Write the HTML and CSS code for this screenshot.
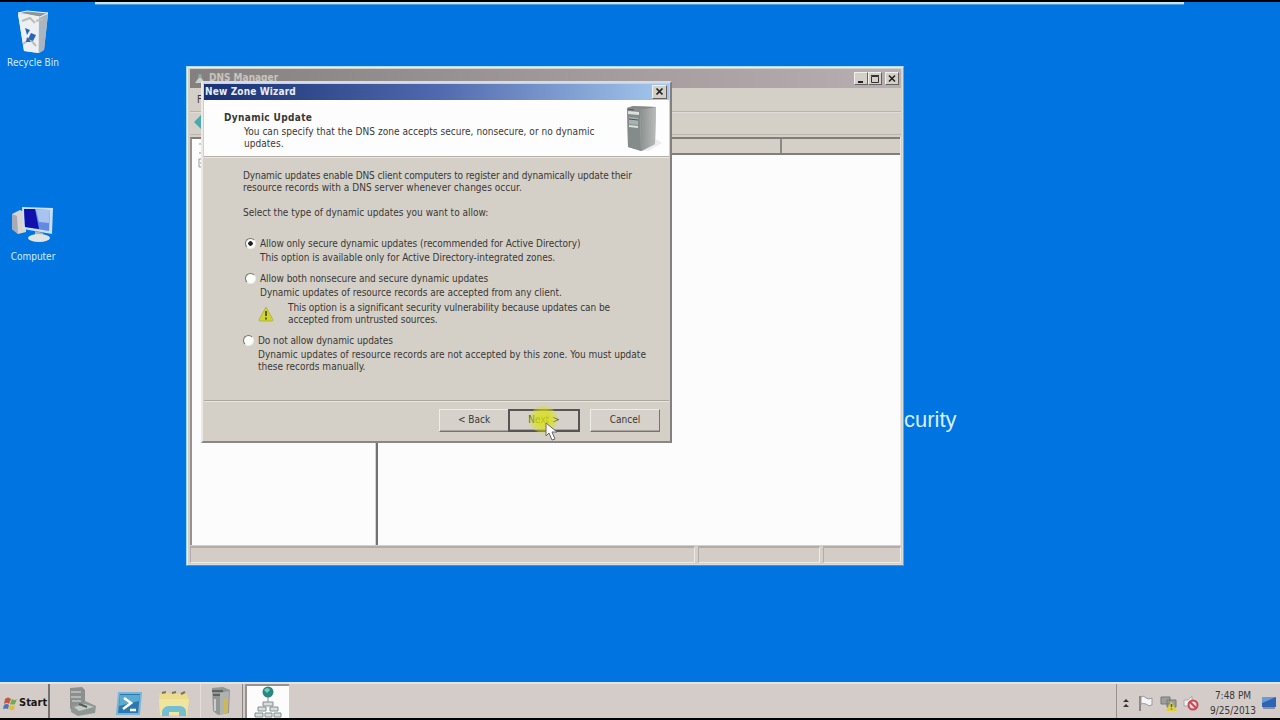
FILE: index.html
```html
<!DOCTYPE html>
<html lang="en">
<head>
<meta charset="UTF-8">
<meta name="viewport" content="width=device-width, initial-scale=1.0">
<title>New Zone Wizard</title>
<link rel="stylesheet" href="styles.css">
</head>
<body>
<div class="desktop">
    <div class="top-line"></div>

    <!-- Desktop icons -->
    <div class="desk-icon recycle">
        <svg width="36" height="44" viewBox="0 0 36 44">
            <path d="M3 4 L33 4 L29 40 L24 43 L9 41 Z" fill="#d5d9df"/>
            <path d="M3 4 L24 6 L23 43 L9 41 Z" fill="#edf0f2"/>
            <path d="M24 6 L33 4 L29 40 L24 43 Z" fill="#a9b5c0"/>
            <path d="M3 3 L12 1 L33 3 L25 7 Z" fill="#8e9697" stroke="#f0f5f5"/>
            <path d="M7 11 l8 -3 5 5 M21 11 l7 -2 M8 34 l7 -5 6 7" stroke="#bcbcb8" stroke-width="2" fill="none"/>
            <path d="M10 18 l5 2 -3 5 z M16 23 l5 2 -3 6 -5 -2 z M12 27 l4 5 -5 0 z" fill="#2965bd"/>
        </svg>
        <span>Recycle Bin</span>
    </div>
    <div class="desk-icon computer">
        <svg width="44" height="40" viewBox="0 0 44 40">
            <path d="M1 9 L9 5 L15 8 L15 27 L7 29 L1 24 Z" fill="#d9d4d0"/>
            <path d="M1 9 L6 11 L7 29 L1 24 Z" fill="#a5abb8"/>
            <path d="M11 2 L42 3 L41 29 L12 24 Z" fill="#c7e0f4"/>
            <path d="M13 4 L39 5 L38 26 L14 22 Z" fill="#618ae0"/>
            <path d="M13 4 L24 4 L28 24 L14 22 Z" fill="#1010ad"/>
            <path d="M25 5 L39 5 L38 18 L28 17 Z" fill="#a9c2ef"/>
            <path d="M24 26 L32 28 L32 32 L24 31 Z" fill="#adb3b9"/>
            <ellipse cx="28" cy="33" rx="11" ry="4" fill="#dfe3e2"/>
        </svg>
        <span>Computer</span>
    </div>
    <div class="wallpaper-text">curity</div>

    <!-- DNS Manager window -->
    <div class="window dns">
        <div class="dns-title">
            <svg width="12" height="11" viewBox="0 0 12 11"><path d="M1 10 L6 3 L11 10 Z" fill="#c9cfcc"/><circle cx="6" cy="3" r="2" fill="#88aaa9"/></svg>
            <span class="dns-name">DNS Manager</span>
            <div class="controls">
                <span class="ctl"><svg width="13" height="12"><path d="M3 9h5" stroke="#222" stroke-width="2"/></svg></span>
                <span class="ctl"><svg width="13" height="12"><path d="M2.500 3.500h7v6h-7z M2 2.500h8" stroke="#333" fill="none"/></svg></span>
                <span class="ctl close"><svg width="13" height="12"><path d="M3 2.500l6 6M9 2.500l-6 6" stroke="#222" stroke-width="1.600"/></svg></span>
            </div>
        </div>
        <div class="menubar">F</div>
        <div class="toolbar"><svg width="14" height="14" viewBox="0 0 14 14"><path d="M0 7 L7 0 L7 4 L14 4 L14 10 L7 10 L7 14 Z" fill="#4aa9ae"/></svg></div>
        <div class="panes">
            <div class="tree">
                <svg width="12" height="28" viewBox="0 0 12 28"><path d="M2 3h8M5 3v7M2 12h8M2 18h6v8h-6zM3 22h5" stroke="#999" fill="none"/></svg>
            </div>
            <div class="list">
                <div class="list-head"><span class="col first"></span><span class="col"></span></div>
            </div>
        </div>
        <div class="statusbar"><span class="wide"></span><span class="mid"></span><span class="end"></span></div>
    </div>

    <!-- New Zone Wizard dialog -->
    <div class="window wizard">
        <div class="wizard-title">
            <span>New Zone Wizard</span>
            <span class="ctl"><svg width="13" height="12"><path d="M3.500 2.500l6 6M9.500 2.500l-6 6" stroke="#222" stroke-width="1.700"/></svg></span>
        </div>
        <div class="wizard-head">
            <div>
                <h1>Dynamic Update</h1>
                <p class="sub">You can specify that the DNS zone accepts secure, nonsecure, or no dynamic<br>updates.</p>
            </div>
            <svg class="server" width="38" height="48" viewBox="0 0 38 48">
                <defs>
                    <linearGradient id="side"><stop offset="0" stop-color="#8b908f"/><stop offset="1" stop-color="#b8bbba"/></linearGradient>
                </defs>
                <path d="M18 45 L31 34 L37 38 L23 46 Z" fill="#ececec"/>
                <path d="M2 3 L8 1 L31 2 L30 39 L17 46 L3 42 Z" fill="#aeb3b2"/>
                <path d="M2 3 L15 5 L16 46 L3 42 Z" fill="#858b8a"/>
                <path d="M15 5 L31 2 L30 39 L16 46 Z" fill="url(#side)"/>
                <path d="M2 3 L8 1 L31 2 L15 5 Z" fill="#858b88"/>
                <path d="M3 6 L14 7 L14 10 L3 9 Z M4 20 L13 21 L13 23 L4 22 Z" fill="#dce1df"/>
                <path d="M4 12 L13 13 L13 20 L4 19 Z" fill="#a8b2b0"/>
                <path d="M3 4 L9 5 M4 14 L13 15" stroke="#4d5553"/>
            </svg>
        </div>
        <div class="wizard-body">
            <p class="intro">Dynamic updates enable DNS client computers to register and dynamically update their<br><span class="second">resource records with a DNS server whenever changes occur.</span></p>
            <p class="question">Select the type of dynamic updates you want to allow:</p>

            <div class="option one">
                <span class="radio checked"></span>
                <div>
                    <p>Allow only secure dynamic updates (recommended for Active Directory)</p>
                    <p class="desc">This option is available only for Active Directory-integrated zones.</p>
                </div>
            </div>
            <div class="option two">
                <span class="radio"></span>
                <div>
                    <p>Allow both nonsecure and secure dynamic updates</p>
                    <p class="desc">Dynamic updates of resource records are accepted from any client.</p>
                    <div class="warning">
                        <svg width="16" height="16" viewBox="0 0 16 16"><path d="M8 1 L15 14 Q15 15 14 15 L2 15 Q1 15 1 14 Z" fill="#d2d52b" stroke="#b1b54b"/><path d="M8 5v5M8 11.500v2" stroke="#5d6210" stroke-width="2"/></svg>
                        <p>This option is a significant security vulnerability because updates can be<br>accepted from untrusted sources.</p>
                    </div>
                </div>
            </div>
            <div class="option three">
                <span class="radio"></span>
                <div>
                    <p>Do not allow dynamic updates</p>
                    <p class="desc">Dynamic updates of resource records are not accepted by this zone. You must update<br>these records manually.</p>
                </div>
            </div>
        </div>
        <div class="wizard-foot">
            <button class="btn">&lt; Back</button>
            <button class="btn default">Next &gt;</button>
            <button class="btn cancel">Cancel</button>
        </div>
    </div>

    <!-- Click highlight and mouse pointer -->
    <div class="highlight"></div>
    <svg class="pointer" width="14" height="20" viewBox="0 0 14 20"><path d="M1 1 L1 14 L4 11 L7 18 L10 17 L7 10 L12 10 Z" fill="#fff" stroke="#666"/></svg>

    <!-- Taskbar -->
    <div class="taskbar">
        <div class="start">
            <svg width="15" height="15" viewBox="0 0 15 15"><path d="M2 3 Q5 0 8 3 L6 8 Q4 6 1 8 Z" fill="#c2573b"/><path d="M9 3 Q12 5 14 3 L12 8 Q10 9 7 8 Z" fill="#70a954"/><path d="M1 9 Q4 7 6 9 L5 13 Q3 12 0 13 Z" fill="#4b73b6"/><path d="M7 9 Q10 11 12 9 L11 14 Q8 15 6 13 Z" fill="#e2bd37"/></svg>
            <span>Start</span>
        </div>
        <div class="task server-task">
            <svg width="30" height="31" viewBox="0 0 30 31"><path d="M3 2 L15 1 L18 4 L18 24 L6 27 L3 22 Z" fill="#8b908e"/><path d="M4 6h10M4 11h10M5 15h9" stroke="#b4b8b5" stroke-width="2"/><path d="M5 19 L18 15 L29 20 L28 27 L11 30 L4 26 Z" fill="#8f9694"/><path d="M7 21 L18 18 L27 21 L12 25 Z" fill="#c4cac6"/><path d="M12 18l8 3" stroke="#545f5a" stroke-width="2"/></svg>
        </div>
        <div class="task shell-task">
            <svg width="28" height="24" viewBox="0 0 28 24"><path d="M4 1 H26 L24 22 H2 Z" fill="#2c78ae" stroke="#78b5d6" stroke-width="2"/><path d="M5 3 H25 L24 9 L4 14 Z" fill="#5caacf"/><path d="M9 6 l7 5 -8 6 M15 18h6" stroke="#fff" stroke-width="2.600" fill="none"/></svg>
        </div>
        <div class="task folder-task">
            <svg width="32" height="28" viewBox="0 0 32 28"><path d="M1 4 L9 1 L12 4 L28 3 L31 8 L29 26 L2 26 Z" fill="#eadc8c"/><path d="M4 3 L8 2M14 3L18 2M23 4l4-2" stroke="#77735c" stroke-width="2"/><path d="M1 9 H31 L29 25 H2 Z" fill="#f0e59c"/><path d="M4 26 V21 Q6 16 11 16 H21 Q27 16 28 21 V26 H21 V22 H11 V26 Z" fill="#75bdd0"/></svg>
        </div>
        <div class="task tools-task">
            <svg width="24" height="30" viewBox="0 0 24 30"><path d="M2 2 L13 1 L20 4 L19 27 L8 29 L3 25 Z" fill="#929795"/><path d="M2 5h11M3 9h10" stroke="#5d6461" stroke-width="2"/><path d="M10 7 L19 5 L18 27 L10 29 Z" fill="#aeb2b0"/><path d="M14 13 L18 12 L18 26 L14 28 Z" fill="#ceb857"/><path d="M5 13v12" stroke="#ccc" stroke-width="2"/></svg>
        </div>
        <div class="task active">
            <svg width="30" height="32" viewBox="0 0 30 32"><path d="M15 10v6M10 16h10v4H10zM5 21h8v4H5zM17 21h8v4h-8zM2 27h8v4H2zM12 27h7v4h-7zM21 27h7v4h-7z" fill="#d8dddd" stroke="#888f91"/><circle cx="15" cy="6" r="5.500" fill="#2c8782"/><path d="M11 4q4-4 6 0l-3 3z" fill="#78cbb6"/></svg>
        </div>
        <div class="tray">
            <svg class="arrow" width="6" height="9" viewBox="0 0 6 9"><path d="M0 3L3 0L6 3ZM0 8L3 5L6 8Z" fill="#333"/></svg>
            <svg class="flag" width="16" height="17" viewBox="0 0 16 17"><path d="M2 1v15" stroke="#888" stroke-width="2"/><path d="M3 2 Q6 0 8 3 Q11 5 14 3 V10 Q11 12 8 9 Q5 8 3 9 Z" fill="#f5f5f5" stroke="#999"/></svg>
            <svg class="net" width="18" height="17" viewBox="0 0 18 17"><path d="M1 2h9v7h-9zM7 5h9v7h-9z" fill="#9aa19d" stroke="#777"/><path d="M11 6L17 16H6Z" fill="#dbcf3b"/><path d="M11.500 9v3M11.500 13.500v1" stroke="#555" stroke-width="1.500"/></svg>
            <svg class="sound" width="17" height="17" viewBox="0 0 17 17"><path d="M1 5h4l4-4v14l-4-4h-4z" fill="#f0eeee" stroke="#aaa"/><circle cx="10" cy="10" r="4.500" fill="#f5d8d8" stroke="#c94658" stroke-width="2"/><path d="M7 7l6 6" stroke="#c94658" stroke-width="2"/></svg>
            <div class="clock">7:48 PM<br>9/25/2013</div>
            <svg class="show" width="14" height="14" viewBox="0 0 14 14"><path d="M0 1h14v10h-14z" fill="#2f63b4"/><path d="M0 1h14l-14 6z" fill="#6c9cd8"/><path d="M1 12h12" stroke="#8a8f97" stroke-width="2"/></svg>
        </div>
    </div>
</div>
</body>
</html>
```
FILE: styles.css
```css
* {
    box-sizing: border-box;
}
body {
    margin: 0;
    font-family: "DejaVu Sans Condensed", "DejaVu Sans", sans-serif;
    font-size: 10px;
    line-height: 12px;
    color: #3a3735;
}
p, h1 {
    margin: 0;
    white-space: nowrap;
}
.desktop {
    position: relative;
    width: 1280px;
    height: 720px;
    overflow: hidden;
    background: #0074e0;
    border-top: 2px solid #000;
    display: flex;
    flex-direction: column;
    justify-content: space-between;
}
.top-line {
    width: 1089px;
    height: 3px;
    margin-left: 95px;
    background: #c5e6f6;
    border-bottom: 1px solid #4b9ee6;
}

/* Desktop icons */
.desk-icon {
    position: absolute;
    width: 66px;
    display: flex;
    flex-direction: column;
    align-items: center;
    color: #d2eefc;
}
.recycle {
    left: 0;
    top: 8px;
}
.recycle span {
    margin-top: 3px;
}
.computer {
    left: 0;
    top: 203px;
}
.computer span {
    margin-top: 6px;
}
.wallpaper-text {
    position: absolute;
    left: 904px;
    top: 405px;
    font: 22px/26px "Liberation Sans", Arial, sans-serif;
    color: #d5efff;
}

/* Windows */
.window {
    position: absolute;
    display: flex;
    flex-direction: column;
    background: #d4d0c8;
}
.ctl {
    width: 14px;
    height: 13px;
    background: #d4d0c8;
    border: 1px solid;
    border-color: #f2f0ed #65615e #65615e #f2f0ed;
    display: flex;
    overflow: hidden;
}
.dns {
    left: 186px;
    top: 64px;
    width: 718px;
    height: 500px;
    padding: 1px 2px 2px 3px;
    border: 1px solid;
    border-color: #b0dcef #829eb2 #6e8895 #9bd3ea;
    box-shadow: inset 1px 1px #e4f0ee, inset -1px -1px #dedbd5;
}
.dns-title {
    height: 19px;
    display: flex;
    align-items: center;
    background: linear-gradient(90deg, #85807e, #b9aeb2);
    padding: 0 2px 0 4px;
    margin-top: 1px;
}
.dns-name {
    margin-left: 3px;
    font-weight: bold;
    color: #c7c3bf;
}
.controls {
    display: flex;
    margin-left: auto;
}
.controls .close {
    margin-left: 3px;
}
.menubar {
    height: 24px;
    padding: 6px 7px;
    border-bottom: 1px solid #b8b4ae;
}
.toolbar {
    height: 23px;
    padding: 2px 4px;
    border-top: 1px solid #e0ddd8;
    border-bottom: 1px solid #b8b4ae;
}
.panes {
    display: flex;
    height: 411px;
    margin-top: 2px;
}
.tree {
    width: 186px;
    padding: 2px 5px;
    background: #fcfcfc;
    border-top: 2px solid #817d7a;
    border-left: 2px solid #989190;
    border-right: 1px solid #d6d3cf;
}
.list {
    flex: 1;
    background: #fcfcfc;
    border-left: 2px solid #747170;
    border-right: 1px solid #e8e4e2;
}
.list-head {
    height: 18px;
    display: flex;
    background: #d4d0c8;
    border-top: 2px solid #817d78;
    border-bottom: 2px solid #817d78;
}
.col.first {
    width: 404px;
    border-right: 2px solid #8c8884;
}
.statusbar {
    display: flex;
    gap: 3px;
    height: 17px;
    margin-top: 1px;
}
.statusbar span {
    border-top: 2px solid #b3aba8;
    border-left: 1px solid #b3aba8;
    border-right: 1px solid #eeeae7;
    border-bottom: 1px solid #eeeae7;
    background: #d4ccc6;
}
.wide {
    width: 505px;
}
.mid {
    width: 122px;
}
.end {
    flex: 1;
}

/* Wizard */
.wizard {
    left: 201px;
    top: 79px;
    width: 471px;
    height: 362px;
    border: 2px solid;
    border-color: #d4dcea #84807e #898683 #ece9e5;
    padding: 1px 1px 0;
}
.wizard-title {
    height: 16px;
    flex: none;
    display: flex;
    align-items: center;
    justify-content: space-between;
    padding: 0 2px 0 1px;
    background: linear-gradient(90deg, #173174, #5068ad 50%, #a4c8ed);
    color: #e8edf6;
    font-weight: bold;
    letter-spacing: 0.15px;
}
.wizard-title .ctl {
    width: 15px;
    height: 14px;
}
.wizard-head {
    height: 57px;
    flex: none;
    display: flex;
    justify-content: space-between;
    background: #fdfdfd;
    border-bottom: 1px solid #b4afab;
    padding: 12px 6px 0 20px;
}
.wizard-head h1 {
    font-size: 10px;
    line-height: 12px;
    letter-spacing: 0.35px;
}
.wizard-head .sub {
    margin: 2px 0 0 20px;
    letter-spacing: 0.04px;
}
.server {
    margin-top: -7px;
}
.wizard-body {
    height: 244px;
    flex: none;
    padding: 12px 0 0 39px;
    border-top: 1px solid #ebe8e4;
    border-bottom: 1px solid #aaa6a0;
}
.intro {
    letter-spacing: -0.107px;
}
.second {
    letter-spacing: 0.04px;
}
.question {
    margin-top: 13px;
}
.option {
    display: flex;
}
.option .desc {
    margin-top: 2px;
    letter-spacing: -0.03px;
}
.one {
    margin: 19px 0 0 2px;
    letter-spacing: -0.06px;
}
.two {
    margin: 9px 0 0 2px;
    letter-spacing: -0.04px;
}
.three {
    margin-top: 9px;
    letter-spacing: -0.07px;
}
.three .desc {
    letter-spacing: 0.02px;
}
.radio {
    width: 11px;
    height: 11px;
    margin-right: 4px;
    flex: none;
    border-radius: 50%;
    background: #fcfcfb;
    border: 1px solid;
    border-color: #777370 #efece8 #efece8 #777370;
}
.checked {
    background: radial-gradient(circle, #222 2px, #fcfcfb 2.5px);
}
.warning {
    display: flex;
    align-items: center;
    gap: 14px;
    margin: 3px 0 0 -2px;
    letter-spacing: -0.08px;
}
.wizard-foot {
    display: flex;
    border-top: 1px solid #e8e5e0;
    padding: 7px 0 0 235px;
}
.btn {
    width: 70px;
    height: 23px;
    padding: 0 0 2px;
    background: #d6d2cb;
    border: 1px solid;
    border-color: #efede8 #777370 #777370 #efede8;
    box-shadow: inset 0 -1px #a9a49f;
    color: #3a3735;
    font: inherit;
}
.default {
    width: 72px;
    margin-left: -1px;
    border: 2px solid #5a5354;
}
.cancel {
    margin-left: 10px;
}
.highlight {
    position: absolute;
    left: 529px;
    top: 404px;
    width: 29px;
    height: 27px;
    border-radius: 50%;
    background: radial-gradient(circle, rgba(217, 225, 24, 0.8) 35%, rgba(217, 225, 24, 0.3) 70%);
}
.pointer {
    position: absolute;
    left: 545px;
    top: 420px;
}

/* Taskbar */
.taskbar {
    display: flex;
    height: 38px;
    border-top: 2px solid #dee6eb;
    border-bottom: 2px solid #000;
    background: #d4ccc9;
}
.start {
    display: flex;
    align-items: center;
    width: 50px;
    gap: 1px;
    padding: 4px 0 0 3px;
    border-right: 2px solid #777270;
    font-weight: bold;
    font-size: 11px;
    color: #191614;
}
.task {
    display: flex;
    align-items: center;
    justify-content: center;
    width: 47px;
}
.server-task {
    width: 60px;
    padding-left: 4px;
}
.shell-task {
    width: 37px;
    padding-top: 5px;
}
.folder-task {
    width: 54px;
    padding-top: 5px;
    border-right: 1px solid #e4dfdc;
}
.tools-task {
    width: 42px;
    border-right: 1px solid #8b8684;
}
.active {
    width: 44px;
    margin-left: 2px;
    background: #fcfcfc;
    border-top: 2px solid #99918e;
    border-left: 2px solid #99918e;
}
.tray {
    display: flex;
    align-items: center;
    width: 164px;
    margin-left: auto;
    padding: 4px 0 0 6px;
    border-left: 1px solid #98918e;
}
.tray svg {
    flex: none;
}
.flag {
    margin-left: 9px;
}
.net {
    margin-left: 6px;
}
.sound {
    margin-left: 5px;
}
.clock {
    width: 52px;
    flex: none;
    margin-left: 7px;
    text-align: center;
    line-height: 15px;
}
.show {
    margin-left: 3px;
}
```
